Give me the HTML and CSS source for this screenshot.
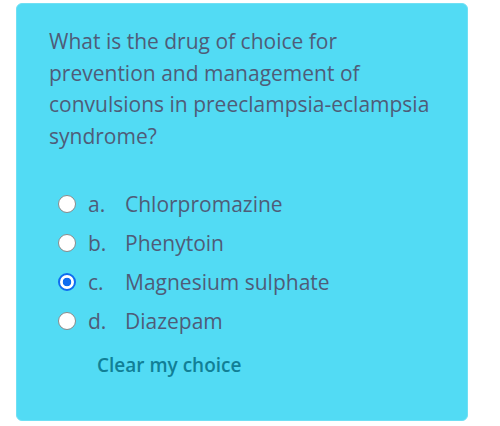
FILE: index.html
```html
<!DOCTYPE html>
<html>
<head>
<meta charset="utf-8">
<link rel="stylesheet" href="styles.css">
</head>
<body>
<div class="que">
  <div class="qtext">What is the drug of choice for prevention and management of convulsions in preeclampsia-eclampsia syndrome?</div>
  <div class="answers">
    <label class="opt"><span class="radio"></span><span class="letter">a.</span><span class="label">Chlorpromazine</span></label>
    <label class="opt"><span class="radio"></span><span class="letter">b.</span><span class="label">Phenytoin</span></label>
    <label class="opt"><span class="radio checked"></span><span class="letter">c.</span><span class="label">Magnesium sulphate</span></label>
    <label class="opt"><span class="radio"></span><span class="letter">d.</span><span class="label">Diazepam</span></label>
  </div>
  <a class="clear">Clear my choice</a>
</div>
</body>
</html>
```
FILE: styles.css
```css
html, body {
  margin: 0;
  padding: 0;
  background: #ffffff;
}
body {
  font-family: "Open Sans", "Liberation Sans", sans-serif;
  color: #4f5c78;
}
.que {
  box-sizing: border-box;
  margin: 3px 0 0 16px;
  width: 452px;
  height: 418px;
  background: #52dbf4;
  border: 1px solid #6fe0f4;
  border-radius: 6px;
  padding: 22px 28px 0 32px;
}
.qtext {
  width: 390px;
  font-size: 21px;
  line-height: 31.5px;
}
.answers {
  margin-top: 32px;
  padding-left: 9px;
  display: flex;
  flex-direction: column;
}
.opt {
  display: flex;
  align-items: center;
  height: 39px;
  font-size: 21px;
}
.radio {
  box-sizing: border-box;
  width: 18px;
  height: 18px;
  border-radius: 50%;
  background: #fff;
  border: 1px solid #8a8a8a;
  flex: none;
}
.radio.checked {
  border: 2.5px solid #0f6cf0;
  background: radial-gradient(circle, #0f6cf0 0 4px, #fff 4.6px);
}
.letter {
  margin-left: 12px;
  width: 37px;
}
.clear {
  display: inline-block;
  margin-top: 12px;
  margin-left: 48px;
  font-size: 19px;
  font-weight: 600;
  color: #117f96;
}
```
